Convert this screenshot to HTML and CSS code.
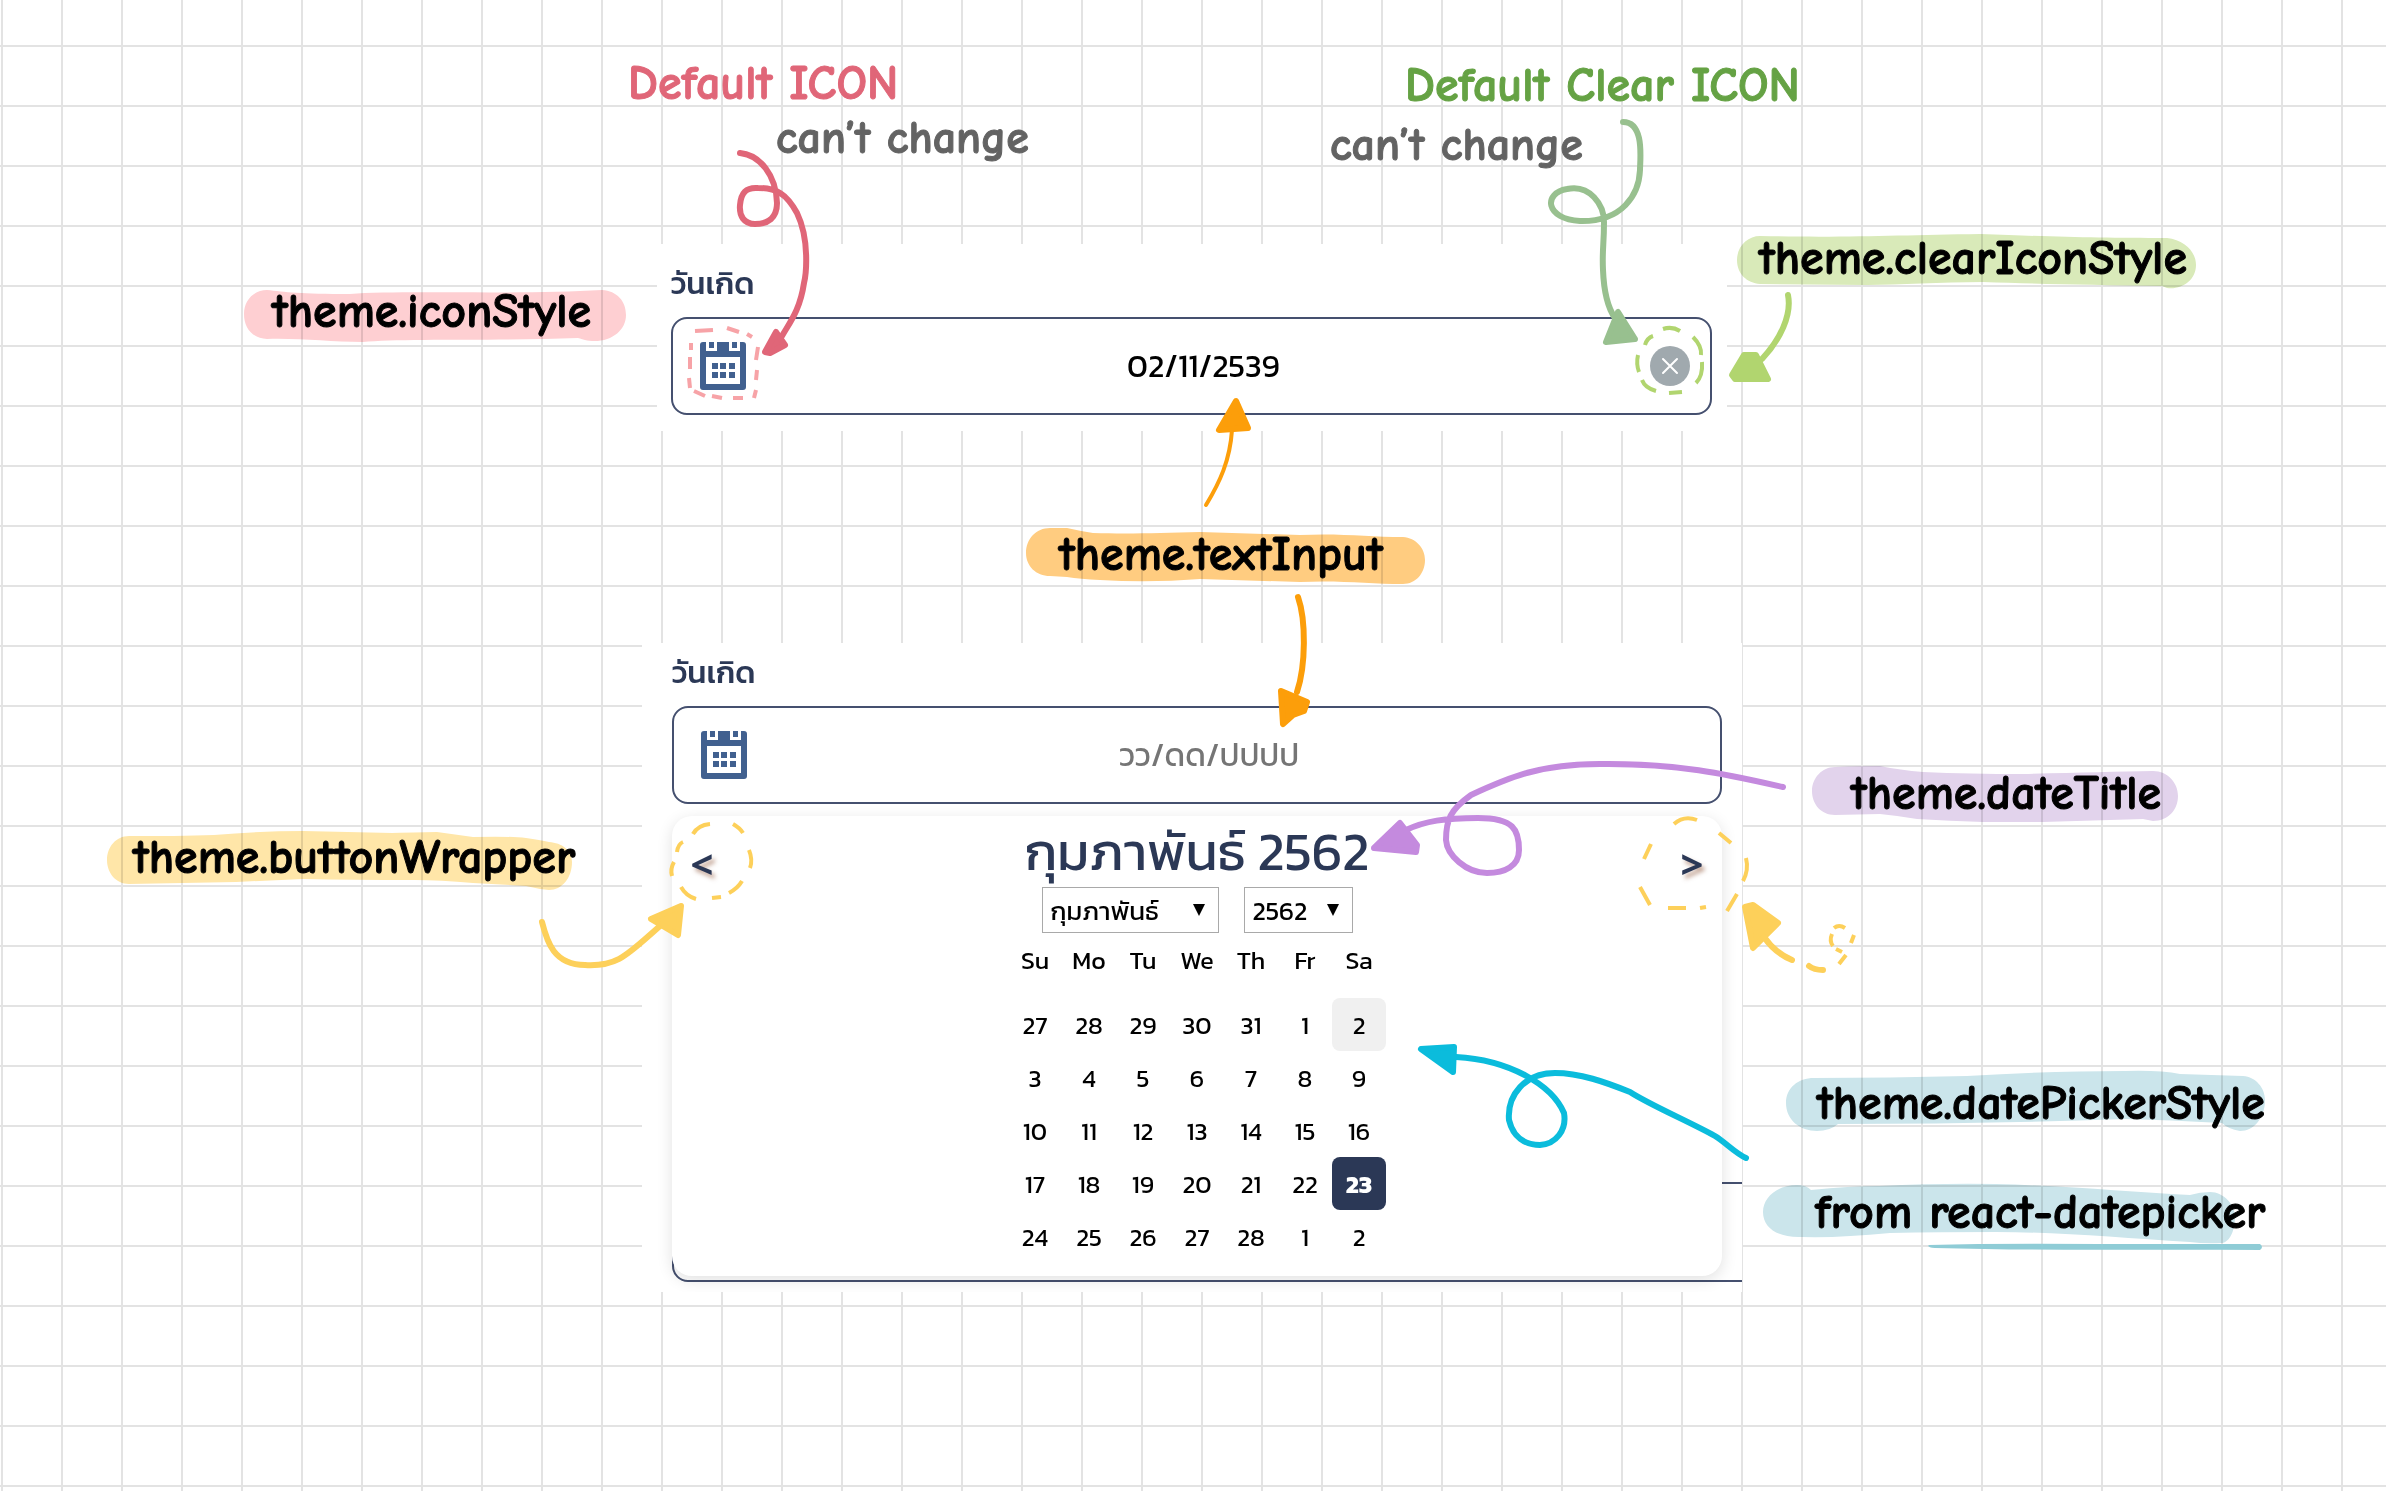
FILE: index.html
```
<!DOCTYPE html>
<html lang="th">
<head>
<meta charset="utf-8">
<meta name="viewport" content="width=device-width, initial-scale=1">
<title>Date picker theme guide</title>
<link rel="stylesheet" href="styles.css">
</head>
<body>
<svg class="defs" aria-hidden="true">
  <symbol id="calendar" viewBox="0 0 48 50">
    <path fill="#41608f" fill-rule="evenodd" d="M4 1H7V10H18V1H30V10H41V1H44Q47 1 47 4V46Q47 49 44 49H4Q1 49 1 46V4Q1 1 4 1ZM7 16V43H41V16Z"/>
    <path fill="#41608f" d="M10 1h5v6h-5zM33 1h5v6h-5zM13 22h6v6h-6zM21 22h6v6h-6zM30 22h6v6h-6zM13 31h6v6h-6zM21 31h6v6h-6zM30 31h6v6h-6z"/>
  </symbol>
</svg>

<main class="board">
  <section class="panel panel-filled">
    <label class="caption" for="birth-filled">วันเกิด</label>
    <div class="field">
      <svg class="field-icon" aria-hidden="true"><use href="#calendar"/></svg>
      <input class="field-input" id="birth-filled" type="text" value="02/11/2539">
      <button class="clear" type="button" aria-label="Clear">
        <svg viewBox="0 0 40 40" aria-hidden="true"><circle cx="20" cy="20" r="20" fill="#a0a9ae"/><path d="M13 13L27 27M27 13L13 27" stroke="#fff" stroke-width="2" stroke-linecap="round"/></svg>
      </button>
    </div>
  </section>

  <section class="panel panel-open">
    <label class="caption" for="birth-open">วันเกิด</label>
    <div class="field field-empty">
      <svg class="field-icon" aria-hidden="true"><use href="#calendar"/></svg>
      <input class="field-input" id="birth-open" type="text" placeholder="วว/ดด/ปปปป">
    </div>
    <div class="popup">
      <div class="covered-field"></div>
      <div class="calendar">
        <header class="calendar-head">
          <button class="step" type="button" aria-label="Previous month">&lt;</button>
          <h2 class="title">กุมภาพันธ์ 2562</h2>
          <button class="step" type="button" aria-label="Next month">&gt;</button>
        </header>
        <div class="pickers">
          <span class="picker picker-month"><select aria-label="Month"><option>กุมภาพันธ์</option></select><svg viewBox="0 0 12 12" aria-hidden="true"><path d="M0 0H12L6 12Z"/></svg></span>
          <span class="picker picker-year"><select aria-label="Year"><option>2562</option></select><svg viewBox="0 0 12 12" aria-hidden="true"><path d="M0 0H12L6 12Z"/></svg></span>
        </div>
        <table class="days">
          <thead><tr><th>Su</th><th>Mo</th><th>Tu</th><th>We</th><th>Th</th><th>Fr</th><th>Sa</th></tr></thead>
          <tbody>
            <tr><td>27</td><td>28</td><td>29</td><td>30</td><td>31</td><td>1</td><td class="hovered">2</td></tr>
            <tr><td>3</td><td>4</td><td>5</td><td>6</td><td>7</td><td>8</td><td>9</td></tr>
            <tr><td>10</td><td>11</td><td>12</td><td>13</td><td>14</td><td>15</td><td>16</td></tr>
            <tr><td>17</td><td>18</td><td>19</td><td>20</td><td>21</td><td>22</td><td class="selected">23</td></tr>
            <tr><td>24</td><td>25</td><td>26</td><td>27</td><td>28</td><td>1</td><td>2</td></tr>
          </tbody>
        </table>
      </div>
    </div>
  </section>

  <div class="notes">
    <svg class="ink highlights" viewBox="0 0 2386 1491" aria-hidden="true">
      <path fill="#fecfd2" d="M267 290C285 292 300 294 350 294C400 290 520 295 602 290C617 291 626 301 626 315C626 330 612 342 592 341C585 341 580 338 578 338C500 341 400 338 363 342C330 342 300 338 267 339C252 338 244 328 244 314C244 300 254 290 267 290Z"/>
      <path fill="#d9eab9" d="M1760 236C1850 238 1900 235 1980 234C2060 237 2100 238 2167 238C2185 240 2196 252 2196 265C2196 280 2182 290 2167 288L2162 286C2090 285 2040 284 1983 282C1940 282 1900 285 1867 285L1760 284C1747 283 1737 274 1737 260C1737 246 1748 236 1760 236Z"/>
      <path fill="#ffcc80" d="M1050 528H1067Q1080 531 1093 533C1130 534 1160 533 1200 532L1300 535C1340 533 1370 537 1403 537C1416 538 1425 548 1425 560C1425 573 1416 584 1403 584C1370 584 1340 580 1300 582L1200 579Q1150 583 1100 580Q1080 579 1067 577L1050 576C1036 576 1026 566 1026 553C1026 539 1036 528 1050 528Z"/>
      <path fill="#ffe6a8" d="M129 836C160 836 190 836 214 835Q260 831 303 831L392 833Q425 832 437 832L473 837Q510 836 526 838Q540 840 549 842C562 843 572 850 572 862C572 878 562 890 549 890Q538 889 526 886L473 883Q440 880 415 880Q350 880 303 879L236 882L129 884C116 884 107 873 107 860C107 847 116 836 129 836Z"/>
      <path fill="#e2d3ec" d="M1835 767Q1860 766 1880 766Q1900 770 1923 772Q1970 774 2023 774Q2100 772 2153 771C2168 771 2178 783 2178 796C2178 810 2168 821 2153 821L2143 819L2043 822H1983Q1950 821 1917 819Q1900 816 1880 814L1835 815C1821 815 1812 804 1812 791C1812 778 1822 767 1835 767Z"/>
      <path fill="#cbe5eb" d="M1814 1078Q1890 1078 1967 1076Q2050 1071 2125 1071Q2160 1070 2180 1074L2243 1076C2256 1077 2265 1088 2265 1100C2265 1118 2254 1131 2240 1131Q2228 1129 2222 1123Q2170 1120 2125 1119Q1980 1124 1838 1124Q1830 1131 1817 1131C1800 1131 1786 1120 1786 1103C1786 1088 1798 1078 1814 1078Z"/>
      <path fill="#cbe5eb" d="M1797 1185Q1806 1185 1811 1190Q1850 1186 1879 1186Q1940 1183 1996 1184C2070 1186 2130 1192 2190 1195Q2200 1192 2210 1192C2224 1192 2235 1205 2235 1217C2235 1230 2230 1242 2222 1243Q2205 1244 2190 1242C2120 1238 2060 1232 1996 1232Q1940 1232 1890 1233Q1840 1238 1802 1237C1778 1238 1763 1228 1763 1212C1763 1197 1778 1185 1797 1185Z"/>
    </svg>

    <p class="note note-icon note-red">Default ICON</p>
    <p class="note note-icon-fixed note-grey">can’t change</p>
    <p class="note note-clear note-green">Default Clear ICON</p>
    <p class="note note-clear-fixed note-grey">can’t change</p>
    <p class="note note-icon-style">theme.iconStyle</p>
    <p class="note note-clear-style">theme.clearIconStyle</p>
    <p class="note note-text-input">theme.textInput</p>
    <p class="note note-date-title">theme.dateTitle</p>
    <p class="note note-button-wrapper">theme.buttonWrapper</p>
    <p class="note note-picker-style">theme.datePickerStyle</p>
    <p class="note note-source">from <a href="https://reactdatepicker.com">react-datepicker</a></p>

    <svg class="ink" viewBox="0 0 2386 1491" aria-hidden="true">
      <g class="pen red">
        <path d="M740 153C760 155 776 175 777 203C777 218 768 224 755 224C744 224 739 216 740 205C741 193 746 187 758 188C776 188 786 193 797 213C810 240 806 275 804 283C800 310 790 322 782 336"/>
        <path class="head" d="M765 352L776 332L785 345L770 353Z"/>
      </g>
      <g class="pen sage">
        <path d="M1623 122C1645 122 1640 160 1640 170C1639 195 1622 222 1580 221C1545 219 1543 193 1567 189C1590 184 1604 205 1604 222C1604 245 1602 250 1603 270C1604 295 1608 308 1615 318"/>
        <path class="head" d="M1618 312L1606 342L1635 339Z"/>
      </g>
      <g class="pen lime">
        <path d="M1788 295C1792 315 1780 340 1762 359"/>
        <path class="head" d="M1744 355H1756L1768 379H1735L1732 375Z"/>
        <path class="dash" d="M1663 329Q1672 326 1680 331M1693 337Q1702 346 1701 355M1702 362Q1703 376 1696 383M1682 392L1669 393M1656 391Q1645 388 1642 380M1639 372Q1636 364 1638 355M1645 345Q1647 338 1653 336"/>
      </g>
      <g class="pen orange">
        <path class="thin" d="M1206 505C1220 482 1230 460 1232 430"/>
        <path class="head" d="M1236 401L1219 430L1248 428Z"/>
        <path d="M1298 597C1306 620 1306 665 1297 692"/>
        <path class="head" d="M1281 691L1307 702L1304 711L1293 715L1283 724Z"/>
      </g>
      <g class="pen yellow">
        <path d="M542 922C547 942 554 965 585 965C618 967 628 954 660 926"/>
        <path class="head" d="M681 906L651 919L678 935Z"/>
        <path class="dash" d="M693 834Q698 825 710 824M733 824Q740 828 743 833M749 850Q753 860 750 868M742 881Q738 888 729 893M721 897L712 898M696 899Q686 896 681 887M672 876Q670 869 674 862M677 852Q678 844 683 842"/>
        <path class="dash" d="M1674 824Q1684 815 1697 820M1719 833L1731 843M1746 858Q1749 870 1743 881M1737 894L1727 911M1706 907L1700 908M1686 908H1668M1650 905L1640 887M1644 859L1651 844"/>
        <path class="head" d="M1745 907L1753 905L1778 923L1753 948Z"/>
        <path d="M1764 937Q1775 953 1792 960M1809 966Q1814 970 1823 970"/>
        <path class="dash" d="M1839 964L1846 955M1836 949L1842 952M1833 946Q1829 941 1832 934M1834 928Q1839 924 1845 928M1854 935L1851 943"/>
      </g>
      <g class="pen violet">
        <path d="M1783 787C1730 775 1680 763 1600 764C1540 764 1510 777 1471 795C1450 810 1446 820 1446 840C1447 855 1466 873 1487 873C1505 873 1519 866 1519 850C1519 830 1514 818 1478 818C1445 818 1425 821 1406 830"/>
        <path class="head" d="M1374 848L1400 823L1417 845L1416 852Z"/>
      </g>
      <g class="pen cyan">
        <path d="M1746 1158C1735 1153 1725 1142 1715 1136C1690 1122 1650 1105 1630 1092C1605 1082 1580 1073 1555 1073C1525 1073 1507 1095 1509 1120C1513 1137 1525 1145 1540 1145C1556 1144 1567 1130 1564 1113C1552 1085 1510 1060 1456 1057"/>
        <path class="head" d="M1421 1049L1454 1047L1453 1072Z"/>
      </g>
      <path class="underline" d="M1929 1245Q2000 1243 2100 1244H2260Q2264 1247 2260 1250C2150 1249 2040 1251 1935 1248Q1926 1247 1929 1245Z"/>
      <path class="pen pink dash" d="M695 331L713 330M727 328L739 332M747 334L752 337M758 347L756 360M757 370L756 380M756 390L754 398M743 398H733M722 398L712 396M705 396L694 391M690 388L689 378M690 369V357M691 350V343"/>
    </svg>
  </div>
</main>
</body>
</html>
```
FILE: styles.css
```
* {
  box-sizing: border-box;
}

body {
  margin: 0;
  color: #000;
  background: #fff;
  font-family: Kanit, Prompt, "Noto Sans", "Noto Sans Thai", sans-serif;
}

.defs {
  position: absolute;
  width: 0;
  height: 0;
}

/* Squared paper */
.board {
  position: relative;
  min-height: 100vh;
  padding: 244px 2px 198px 0;
  overflow: hidden;
  background-image:
    linear-gradient(90deg, #e3e3e3 2px, transparent 2px),
    linear-gradient(#e3e3e3 2px, transparent 2px);
  background-size: 60px 60px;
  background-position: 1px 45px;
}

.panel {
  margin: 0 auto;
  background: #fff;
}

.panel-filled {
  max-width: 1070px;
  padding: 0 15px 16px 14px;
}

.panel-open {
  max-width: 1100px;
  margin-top: 212px;
  padding-left: 30px;
  overflow: hidden;
}

.caption {
  display: block;
  padding-top: 19px;
  height: 73px;
  color: #2b3856;
  font-size: 31px;
  line-height: 40px;
  font-weight: 500;
}

.panel-open .caption {
  padding-top: 9px;
  height: 63px;
}

.field {
  display: flex;
  align-items: center;
  height: 98px;
  padding: 0 20px 0 26px;
  border: 2px solid #45506f;
  border-radius: 16px;
  background: #fff;
}

.field-empty {
  margin-right: 20px;
  padding-right: 60px;
}

.field-icon {
  flex: none;
  width: 48px;
  height: 50px;
}

.field-input {
  flex: 1;
  min-width: 0;
  margin-left: 10px;
  padding: 0;
  border: 0;
  color: #000;
  background: none;
  font: inherit;
  font-size: 32px;
  line-height: 40px;
  text-align: center;
}

.field-input::placeholder {
  color: #757575;
}

.clear {
  flex: none;
  width: 40px;
  height: 40px;
  padding: 0;
  border: 0;
  background: none;
}

.clear svg {
  display: block;
}

/* Popup calendar, spread over the next field of the form */
.popup {
  position: relative;
  padding: 12px 20px 16px 0;
}

.covered-field {
  position: absolute;
  right: -40px;
  bottom: 10px;
  left: 0;
  height: 100px;
  border: 2px solid #45506f;
  border-radius: 16px;
}

.calendar {
  position: relative;
  padding-bottom: 13px;
  border-radius: 20px;
  background: #fff;
  box-shadow: 0 4px 16px rgba(0, 0, 0, 0.12);
}

.calendar-head {
  display: flex;
  justify-content: space-between;
  align-items: center;
  height: 71px;
}

.title {
  margin: 0;
  color: #2b3856;
  font-size: 53px;
  line-height: 71px;
  font-weight: 400;
  white-space: nowrap;
}

.step {
  align-self: flex-end;
  width: 60px;
  height: 46px;
  padding: 0;
  border: 0;
  color: #2b3856;
  background: none;
  font-family: "Noto Sans", sans-serif;
  font-size: 40px;
  line-height: 46px;
  font-weight: 700;
  text-shadow: 3px 4px 4px rgba(140, 80, 50, 0.5);
}

.pickers {
  display: flex;
  justify-content: center;
  gap: 25px;
}

.picker {
  position: relative;
}

.picker-month {
  width: 177px;
}

.picker-year {
  width: 109px;
}

.picker select {
  display: block;
  width: 100%;
  height: 46px;
  padding: 0 8px;
  border: 1px solid #a9a9a9;
  border-radius: 0;
  color: #000;
  background: #fff;
  appearance: none;
  font: inherit;
  font-size: 26px;
}

.picker svg {
  position: absolute;
  top: 17px;
  right: 14px;
  width: 12px;
  height: 12px;
}

.days {
  margin: 0 auto;
  border-collapse: collapse;
  table-layout: fixed;
  width: 378px;
  font-size: 25px;
  line-height: 32px;
  text-align: center;
}

.days th {
  height: 65px;
  padding: 0 0 12px;
  font-weight: 400;
}

.days td {
  height: 53px;
  padding: 0;
}

.hovered,
.selected {
  border-radius: 8px;
  background: #f0f0f0;
}

.days .selected {
  color: #fff;
  background: #2b3856;
  font-weight: 700;
}

/* Handwritten notes and arrows, laid freely over the board */
.notes {
  position: absolute;
  top: 0;
  left: 50%;
  width: 2386px;
  height: 1491px;
  margin-left: -1193px;
  pointer-events: none;
}

.ink {
  position: absolute;
  inset: 0;
}

.highlights {
  mix-blend-mode: multiply;
}

.note {
  position: absolute;
  margin: 0;
  color: #000;
  font-family: "Chalkboard SE", "Comic Neue", "Open Sans", sans-serif;
  font-size: 48px;
  line-height: 56px;
  font-weight: 700;
  white-space: nowrap;
  -webkit-text-stroke: 1px currentColor;
}

.note a {
  color: inherit;
  text-decoration: none;
  pointer-events: auto;
}

.note-red { color: #e06678; }
.note-grey { color: #636363; font-size: 46px; }
.note-green { color: #65a244; }

.note-icon { left: 628px; top: 56px; }
.note-icon-fixed { left: 776px; top: 111px; }
.note-clear { left: 1405px; top: 58px; }
.note-clear-fixed { left: 1330px; top: 118px; }
.note-icon-style { left: 272px; top: 284px; }
.note-clear-style { left: 1759px; top: 231px; }
.note-text-input { left: 1059px; top: 527px; }
.note-date-title { left: 1851px; top: 766px; }
.note-button-wrapper { left: 133px; top: 830px; }
.note-picker-style { left: 1817px; top: 1076px; }
.note-source { left: 1815px; top: 1185px; }

.pen {
  fill: none;
  stroke-width: 6;
  stroke-linecap: round;
  stroke-linejoin: round;
}

.pen .thin {
  stroke-width: 4;
}

.pen .dash,
.pen.dash {
  stroke-width: 4;
  stroke-linecap: butt;
}

.red { stroke: #e06678; }
.red .head { fill: #e06678; }
.sage { stroke: #98c08f; }
.sage .head { fill: #98c08f; }
.lime { stroke: #b1d56f; }
.lime .head { fill: #b1d56f; }
.orange { stroke: #fc9e0a; }
.orange .head { fill: #fc9e0a; }
.yellow { stroke: #fdd05a; }
.yellow .head { fill: #fdd05a; }
.violet { stroke: #c48ade; }
.violet .head { fill: #c48ade; }
.cyan { stroke: #0bbcdc; }
.cyan .head { fill: #0bbcdc; }
.pink { stroke: #f7a3a7; }
.underline { fill: #8fccd6; }
```
